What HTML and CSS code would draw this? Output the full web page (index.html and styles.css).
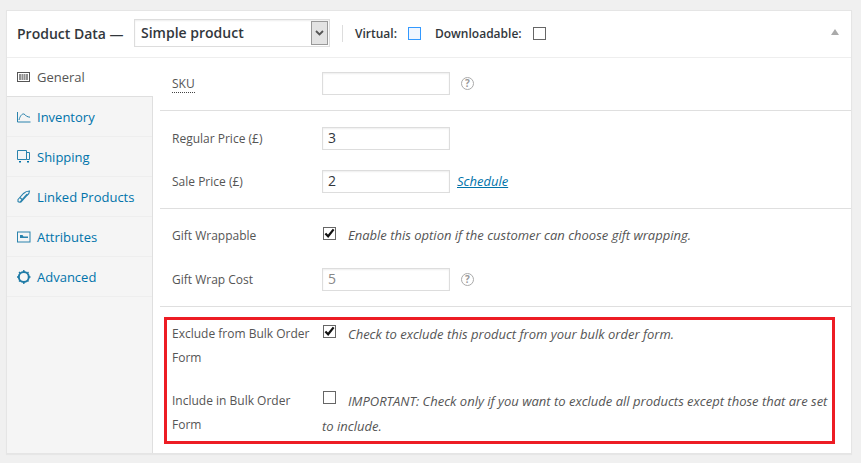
FILE: index.html
```html
<!DOCTYPE html>
<html lang="en">
<head>
<meta charset="utf-8">
<title>Product Data</title>
<link rel="stylesheet" href="styles.css">
</head>
<body>
<div class="card">
  <header class="head">
    <span class="title">Product Data —</span>
    <span class="select"><span class="select-text">Simple product</span><span class="select-btn"><svg width="9" height="6" viewBox="0 0 9 6"><path d="M1 1l3.500 3.500L8 1" fill="none" stroke="#555" stroke-width="1.800"/></svg></span></span>
    <span class="sep"></span>
    <span class="opt">Virtual:</span><span class="cb cb-focus"></span>
    <span class="opt opt-dl">Downloadable:</span><span class="cb"></span>
    <span class="spacer"></span>
    <span class="arrow"></span>
  </header>
  <div class="body">
    <nav class="tabs">
      <a class="tab active"><svg class="ic" width="14" height="12" viewBox="0 0 14 12"><rect x=".5" y="1.500" width="12" height="9" fill="#fff" stroke="#555"/><path d="M2 3h9v6H2z" fill="#8f8f8f"/><path d="M4.500 3v6M6.500 3v6M8.500 3v6" stroke="#c4c4c4"/></svg>General</a>
      <a class="tab"><svg class="ic" width="14" height="12" viewBox="0 0 14 12"><path d="M.5 1v10h13" fill="none" stroke="#2a83ad"/><path d="M2 9C3 5 5 2.500 7 3c1 .3 1.500 1.500 2.500 2.200 1 .6 2.500.8 3.500 1" fill="none" stroke="#2a83ad"/></svg>Inventory</a>
      <a class="tab"><svg class="ic" width="14" height="13" viewBox="0 0 14 13"><path d="M.5 .5h9v9h-9zM9.500 2.500h3v7h-3" fill="none" stroke="#2a83ad"/><path d="M2 11h2v1.500H2zM10 11h2v1.500h-2z" fill="#0073aa"/></svg>Shipping</a>
      <a class="tab"><svg class="ic" width="14" height="13" viewBox="0 0 14 13"><path d="M1 9.500L6.500 3.500Q9 1 12.500 1Q12.500 3.500 10 5.500L4 12Q2 12.500 1 11.500ZM3 12L10 4M3 7.500l3 3" fill="none" stroke="#2a83ad" stroke-width="1.100"/></svg>Linked Products</a>
      <a class="tab"><svg class="ic" width="14" height="12" viewBox="0 0 14 12"><rect x=".5" y="1" width="12.500" height="10" fill="none" stroke="#2a83ad"/><path d="M3 4h2.500l1 1.500H11V7H3z" fill="#2a83ad"/></svg>Attributes</a>
      <a class="tab"><svg class="ic" width="14" height="14" viewBox="0 0 14 14"><circle cx="6.800" cy="7" r="5" fill="none" stroke="#1f7ba6" stroke-width="2"/><path d="M6.800 0v2M6.800 12v2M0 7h1.500M12 7h1.500M2 2l1 1M10.500 10.500L11.500 11.500M11.500 2l-1 1M3 10.500L2 11.500" stroke="#1f7ba6" stroke-width="1.400"/></svg>Advanced</a>
    </nav>
    <main class="panel">
      <section class="group group-sku">
        <div class="field">
          <label class="lbl"><span class="abbr">SKU</span></label>
          <span class="input"></span>
          <span class="help">?</span>
        </div>
      </section>
      <section class="group group-price">
        <div class="field">
          <label class="lbl">Regular Price (£)</label>
          <span class="input val">3</span>
        </div>
        <div class="field">
          <label class="lbl">Sale Price (£)</label>
          <span class="input val">2</span>
          <a class="sched">Schedule</a>
        </div>
      </section>
      <section class="group group-gift">
        <div class="field">
          <label class="lbl">Gift Wrappable</label>
          <span class="cb cb-check"><svg width="12" height="11" viewBox="0 0 12 11"><path d="M1.500 5.500l3 3 6-7.500" fill="none" stroke="#111" stroke-width="2.400"/></svg></span>
          <em class="desc">Enable this option if the customer can choose gift wrapping.</em>
        </div>
        <div class="field">
          <label class="lbl">Gift Wrap Cost</label>
          <span class="input val muted">5</span>
          <span class="help">?</span>
        </div>
      </section>
      <section class="redbox">
        <div class="wrapfield">
          <label class="wraplbl">Exclude from Bulk Order Form</label>
          <div class="wrapdesc"><span class="cb cb-check cb-inline"><svg width="12" height="11" viewBox="0 0 12 11"><path d="M1.500 5.500l3 3 6-7.500" fill="none" stroke="#111" stroke-width="2.400"/></svg></span><em class="desc">Check to exclude this product from your bulk order form.</em></div>
        </div>
        <div class="wrapfield">
          <label class="wraplbl">Include in Bulk Order Form</label>
          <div class="wrapdesc"><span class="cb cb-inline"></span><em class="desc">IMPORTANT: Check only if you want to exclude all products except those that are set to include.</em></div>
        </div>
      </section>
    </main>
  </div>
</div>
</body>
</html>
```
FILE: styles.css
```css
* { box-sizing: border-box; }
html, body { margin: 0; height: 100%; }
body {
  background: #f0f0f0;
  font-family: "Open Sans", sans-serif;
  font-size: 12px;
  color: #555;
  padding: 10px 9px 9px 6px;
  overflow: hidden;
}
.card {
  height: 444px;
  background: #fff;
  border: 1px solid #e5e5e5;
  box-shadow: 0 1px 1px rgba(0,0,0,.04);
}
.head {
  height: 47px;
  border-bottom: 1px solid #eee;
  display: flex;
  align-items: center;
  padding: 0 10px 2px 10px;
}
.title { font-size: 14px; font-weight: 600; color: #32373c; width: 117px; }
.select {
  width: 196px; height: 28px;
  border: 1px solid #ddd;
  box-shadow: inset 0 1px 2px rgba(0,0,0,.07);
  display: flex; align-items: stretch; justify-content: space-between;
  font-size: 14px; font-weight: 600; color: #32373c;
}
.select-text { padding: 2px 0 0 6px; line-height: 22px; }
.select-btn {
  width: 17px; margin: 1px;
  background: #e3e3e3; border: 1px solid #999;
  display: flex; align-items: center; justify-content: center;
}
.sep { width: 1px; height: 17px; background: #ddd; margin: 0 12px 0 12px; }
.opt { font-size: 12px; font-weight: 600; color: #32373c; margin-top: 1px; }
.opt-dl { margin-left: 14px; }
.cb {
  display: inline-flex; align-items: center; justify-content: center;
  width: 13px; height: 13px;
  border: 1px solid #666; background: #fff;
  margin-left: 11px; flex: none;
}
.cb-focus { border-color: #3399ff; background: #f0f6ff; }
.spacer { flex: 1; }
.arrow {
  width: 0; height: 0; margin-right: 2px;
  border-left: 4px solid transparent; border-right: 4px solid transparent;
  border-bottom: 6px solid #aaa; margin-top: -2px;
}
.body { display: flex; height: 395px; }
.tabs {
  width: 146px; flex: none;
  background: #f5f5f5;
  border-right: 1px solid #dfdfdf;
  display: flex; flex-direction: column;
}
.tab {
  height: 40px;
  display: flex; align-items: center;
  border-bottom: 1px solid #eee;
  color: #0073aa;
  font-size: 13px;
  padding-left: 10px;
  gap: 6px;
}
.tab .ic { width: 14px; flex: none; }
.tab.active {
  background: #fff; color: #555;
  width: 146px; height: 39px;
  margin-right: -1px;
  border-bottom: 1px solid #dfdfdf;
  position: relative;
}
.panel { flex: 1; padding-left: 7px; min-width: 0; }
.group { border-bottom: 1px solid #dfdfdf; }
.group-sku { height: 53px; padding-top: 13px; }
.group-price { height: 98px; padding-top: 15px; }
.group-gift { height: 98px; padding-top: 14px; }
.group-price .field + .field { margin-top: 19px; }
.group-gift .field + .field { margin-top: 20px; }
.field { display: flex; align-items: center; height: 24px; padding-left: 12px; }
.lbl { width: 150px; flex: none; }
.abbr { border-bottom: 1px dotted #444; }
.input {
  width: 128px; height: 23px;
  border: 1px solid #ddd;
  box-shadow: inset 0 1px 2px rgba(0,0,0,.07);
  flex: none; font-size: 14px; color: #32373c;
  padding-left: 5px; line-height: 20px;
}
.muted { color: #888; }
.help {
  width: 13px; height: 13px; border-radius: 50%;
  border: 1.500px solid #aaa; color: #999;
  margin-left: 11px; font-size: 10px; font-weight: 700;
  display: flex; align-items: center; justify-content: center;
  line-height: 1;
}
.sched { margin-left: 7px; color: #0073aa; font-size: 13px; font-style: italic; text-decoration: underline; }
.desc { font-style: italic; font-size: 13px; color: #555; }
.field .cb-check { margin-left: 1px; margin-top: -4px; margin-right: 12px; }
.redbox {
  width: 671px; height: 127px;
  margin: 10px 0 0 4px;
  border: 3px solid #ed1c24;
  padding: 2px 2px 0 5px;
}
.wrapfield { display: flex; line-height: 24px; height: 67px; }
.wrapfield + .wrapfield { height: 50px; }
.wraplbl { width: 150px; flex: none; padding-right: 8px; }
.wrapdesc { flex: 1; min-width: 0; line-height: 25px; }
.cb-inline { margin: 0 12px 0 1px; vertical-align: 2px; }
```
